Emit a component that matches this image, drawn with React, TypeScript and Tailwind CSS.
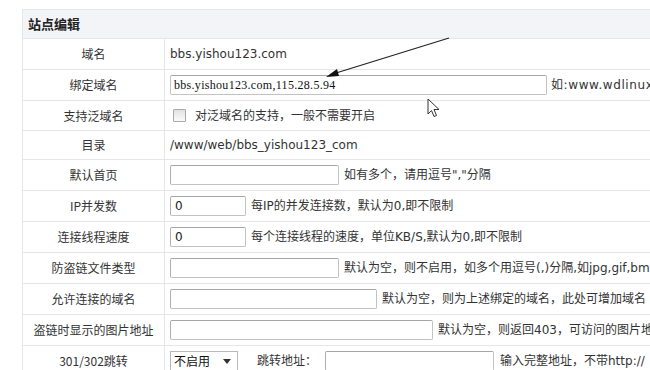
import React from 'react';

const cn = '"Noto Sans CJK SC", "DejaVu Sans", sans-serif';
const latin = '"DejaVu Sans", "Noto Sans CJK SC", sans-serif';

interface RowProps {
  label: string;
  h?: string;
  children: React.ReactNode;
}

const Row: React.FC<RowProps> = ({ label, h = 'h-[31px]', children }) => (
  <div className={`flex ${h} border-b border-[#e4e6e9]`}>
    <div className="w-[142px] shrink-0 flex items-center justify-center border-r border-[#e4e6e9]">
      {label}
    </div>
    <div className="flex-1 flex items-center pl-[5px] whitespace-nowrap overflow-hidden">{children}</div>
  </div>
);

const Box: React.FC<{ w: string; value?: string }> = ({ w, value }) => (
  <div
    className={`${w} h-[20px] shrink-0 border border-[#c2c2c2] border-t-[#a6a6a6] border-l-[#b0b0b0] rounded-[2px] bg-white flex items-center pl-[4px] text-[12px] text-[#222]`}
    style={{ fontFamily: latin }}
  >
    {value}
  </div>
);

const Note: React.FC<{ ml?: string; children: React.ReactNode }> = ({ ml = 'ml-[5px]', children }) => (
  <span className={`${ml} text-[12px] text-[#333]`} style={{ fontFamily: latin }}>
    {children}
  </span>
);

export default function App() {
  return (
    <div className="relative w-[650px] h-[370px] overflow-hidden bg-white text-[12px] text-[#333]" style={{ fontFamily: cn }}>
      <div className="ml-[22px] mt-[9px] w-[700px] border-l border-t border-[#e4e6e9]">
        <div className="h-[29px] bg-[#f2f4f7] border-b border-[#e4e6e9] flex items-center pl-[5px] text-[13px] font-bold text-[#222]">
          站点编辑
        </div>
        <Row label="域名">
          <span className="text-[12px]" style={{ fontFamily: latin }}>bbs.yishou123.com</span>
        </Row>
        <Row label="绑定域名">
          <div
            className="w-[377px] h-[20px] shrink-0 border border-[#c2c2c2] border-t-[#a6a6a6] rounded-[2px] flex items-center pl-[3px] text-[12px] tracking-[0.3px] text-[#111]"
            style={{ fontFamily: '"Liberation Serif", serif' }}
          >
            bbs.yishou123.com,115.28.5.94
          </div>
          <span className="ml-[4px] text-[12px] tracking-[0.6px]" style={{ fontFamily: latin }}>
            如:www.wdlinux.cn
          </span>
        </Row>
        <Row label="支持泛域名" h="h-[30px]">
          <div className="ml-[3px] w-[13px] h-[13px] border border-[#a9a9a9] bg-gradient-to-b from-[#e2e2e2] to-[#fafafa] rounded-[1px]" />
          <Note ml="ml-[9px]">对泛域名的支持，一般不需要开启</Note>
        </Row>
        <Row label="目录" h="h-[29px]">
          <span className="text-[12px]" style={{ fontFamily: latin }}>/www/web/bbs_yishou123_com</span>
        </Row>
        <Row label="默认首页">
          <Box w="w-[169px]" />
          <Note>如有多个，请用逗号","分隔</Note>
        </Row>
        <Row label="IP并发数">
          <Box w="w-[76px]" value="0" />
          <Note>每IP的并发连接数，默认为0,即不限制</Note>
        </Row>
        <Row label="连接线程速度">
          <Box w="w-[76px]" value="0" />
          <Note>每个连接线程的速度，单位KB/S,默认为0,即不限制</Note>
        </Row>
        <Row label="防盗链文件类型">
          <Box w="w-[169px]" />
          <Note>默认为空，则不启用，如多个用逗号(,)分隔,如jpg,gif,bmp</Note>
        </Row>
        <Row label="允许连接的域名">
          <Box w="w-[207px]" />
          <Note>默认为空，则为上述绑定的域名，此处可增加域名</Note>
        </Row>
        <Row label="盗链时显示的图片地址">
          <Box w="w-[263px]" />
          <Note>默认为空，则返回403，可访问的图片地址</Note>
        </Row>
        <Row label="301/302跳转">
          <div className="w-[68px] h-[20px] shrink-0 border border-[#b8b8b8] flex items-center justify-between pl-[3px] pr-[6px] text-[12px] text-[#111]">
            不启用
            <svg width="8" height="5" viewBox="0 0 8 5">
              <path d="M0 0 L8 0 L4 5 Z" fill="#333" />
            </svg>
          </div>
          <Note ml="ml-[19px]">跳转地址：</Note>
          <div className="ml-[8px]">
            <Box w="w-[169px]" />
          </div>
          <Note ml="ml-[6px]">输入完整地址，不带http://</Note>
        </Row>
      </div>

      {/* annotation arrow */}
      <svg className="absolute left-0 top-0 pointer-events-none" width="650" height="370">
        <line x1="449" y1="38" x2="336" y2="73" stroke="#222" strokeWidth="1.2" />
        <path d="M326 77 L337 69 L339 76 Z" fill="#111" />
      </svg>

      {/* mouse cursor */}
      <svg className="absolute left-[427px] top-[98px]" width="14" height="22" viewBox="0 0 14 22">
        <path d="M1 1 L1 16 L4.5 12.5 L7 18.5 L9.5 17.5 L7 11.5 L12 11.5 Z" fill="#fff" stroke="#333" strokeWidth="1" strokeLinejoin="round" />
      </svg>
    </div>
  );
}
